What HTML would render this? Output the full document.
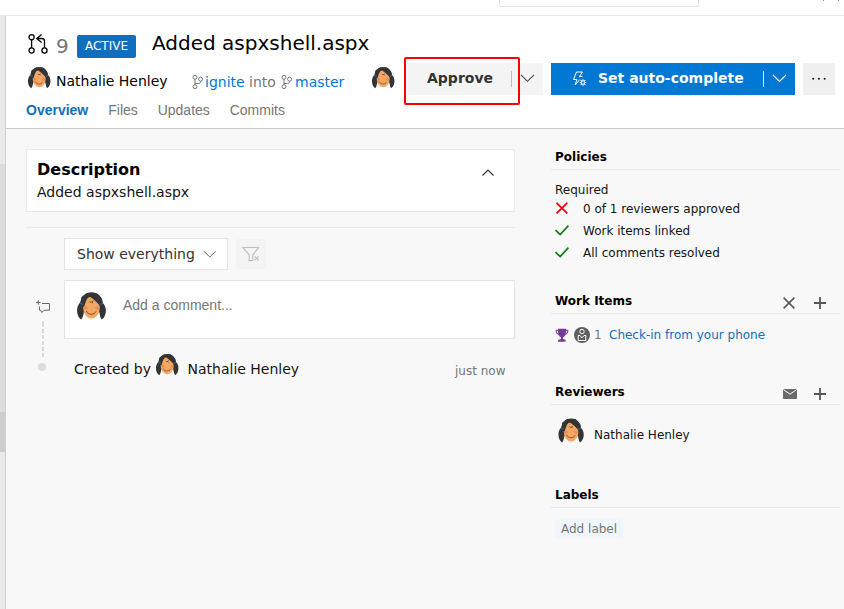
<!DOCTYPE html>
<html><head><meta charset="utf-8">
<style>
*{box-sizing:border-box;margin:0;padding:0}
html,body{width:844px;height:609px;overflow:hidden;background:#fff}
body{font-family:"DejaVu Sans","Liberation Sans",sans-serif;font-size:14px;color:#000;position:relative}
.abs{position:absolute;white-space:nowrap}
.lib{font-family:"Liberation Sans",sans-serif}
a{text-decoration:none;color:#0078d4}
</style></head><body>
<!-- top bar remnants -->
<div class="abs" style="left:499px;top:-9px;width:200px;height:16px;border:1px solid #e4e4e4;border-radius:2px;background:#fff"></div>
<div class="abs" style="left:0;top:15px;width:844px;height:1px;background:#eaeaea"></div>
<!-- left strip -->
<div class="abs" style="left:0;top:16px;width:5px;height:593px;background:#eaeaea"></div>
<div class="abs" style="left:0;top:164px;width:5px;height:248px;background:#dcdcdc"></div>
<div class="abs" style="left:0;top:412px;width:5px;height:40px;background:#cdcdcd"></div>
<div class="abs" style="left:5px;top:16px;width:1px;height:593px;background:#d0d0d0"></div>
<!-- content bg -->
<div class="abs" style="left:6px;top:128px;width:838px;height:481px;background:#f8f8f8;border-top:1px solid #c8c8c8"></div>

<!-- header -->
<svg class="abs" style="left:27px;top:33px" width="22" height="22" viewBox="0 0 22 22" fill="none" stroke="#000" stroke-width="1.300">
<circle cx="4.600" cy="4.200" r="2.550"/><circle cx="4.600" cy="17.500" r="2.550"/><circle cx="17.500" cy="17.500" r="2.550"/>
<path d="M4.600 6.800v8.100M17.500 14.900V8.200c0-1.700-1-2.700-2.700-2.700H10M14.600 1.600L9.800 5.500l4.800 3.900"/>
</svg>
<div class="abs" style="left:56px;top:34px;font-size:20px;line-height:24px;color:#767676">9</div>
<div class="abs" style="left:77px;top:35px;width:59px;height:23px;background:#106ebe;border-radius:2px;color:#fff;font-size:12px;line-height:23px;text-align:center">ACTIVE</div>
<div class="abs" style="left:152px;top:31px;font-size:20px;line-height:24px">Added aspxshell.aspx</div>

<svg viewBox="0 0 32 32" class="abs" style="left:24px;top:62px" width="32" height="32"><path fill="#343436" d="M15.300 4.900C10.700 4.900 7.300 7.800 6.500 12.900C4.600 14.400 3.700 17.300 4 20.300C4.300 23.200 5.600 25.500 7.300 26.200C8.400 24.400 9.100 22.400 9.200 20.400L21.400 20.400C21.600 22.400 22.100 24.400 23.100 26.200C24.800 25.400 26.100 23.200 26.400 20.300C26.700 17.400 25.700 14.500 23.900 13.100C23.300 7.800 19.900 4.900 15.300 4.900Z"/><ellipse cx="15.200" cy="16.800" rx="6.500" ry="8.500" fill="#f3a762"/><path fill="#343436" d="M13.200 7.800C12 9.300 10.500 12.200 9.500 16.400L6.500 14.200L7.400 8.500L12 5.400L19 5.600L23.400 10L23.900 14L21.800 15.600C20.400 13.400 17 10.300 13.200 7.800Z"/><ellipse cx="10.700" cy="17.200" rx="1.600" ry="1.300" fill="#e07c50" opacity=".55"/><ellipse cx="19.600" cy="17.200" rx="1.600" ry="1.300" fill="#e07c50" opacity=".55"/><path d="M11.300 19.800C12.500 22.700 17.300 22.900 18.600 20.100" fill="none" stroke="#5a3520" stroke-width=".6" stroke-linecap="round"/><path d="M14 12.200l.9.700.5-.600.700.9M16 12.200l.6-.5" fill="none" stroke="#2a2020" stroke-width=".55" stroke-linecap="round"/><path d="M6 13.400l2.400 1" stroke="#2b62a0" stroke-width="1.100" fill="none"/><path d="M21.500 14.400l2.500-.9" stroke="#2b62a0" stroke-width="1.100" fill="none"/></svg>
<svg viewBox="0 0 32 32" class="abs" style="left:368px;top:62px" width="32" height="32"><path fill="#343436" d="M15.300 4.900C10.700 4.900 7.300 7.800 6.500 12.900C4.600 14.400 3.700 17.300 4 20.300C4.300 23.200 5.600 25.500 7.300 26.200C8.400 24.400 9.100 22.400 9.200 20.400L21.400 20.400C21.600 22.400 22.100 24.400 23.100 26.200C24.800 25.400 26.100 23.200 26.400 20.300C26.700 17.400 25.700 14.500 23.900 13.100C23.300 7.800 19.900 4.900 15.300 4.900Z"/><ellipse cx="15.200" cy="16.800" rx="6.500" ry="8.500" fill="#f3a762"/><path fill="#343436" d="M13.200 7.800C12 9.300 10.500 12.200 9.500 16.400L6.500 14.200L7.400 8.500L12 5.400L19 5.600L23.400 10L23.900 14L21.800 15.600C20.400 13.400 17 10.300 13.200 7.800Z"/><ellipse cx="10.700" cy="17.200" rx="1.600" ry="1.300" fill="#e07c50" opacity=".55"/><ellipse cx="19.600" cy="17.200" rx="1.600" ry="1.300" fill="#e07c50" opacity=".55"/><path d="M11.300 19.800C12.500 22.700 17.300 22.900 18.600 20.100" fill="none" stroke="#5a3520" stroke-width=".6" stroke-linecap="round"/><path d="M14 12.200l.9.700.5-.600.700.9M16 12.200l.6-.5" fill="none" stroke="#2a2020" stroke-width=".55" stroke-linecap="round"/><path d="M6 13.400l2.400 1" stroke="#2b62a0" stroke-width="1.100" fill="none"/><path d="M21.500 14.400l2.500-.9" stroke="#2b62a0" stroke-width="1.100" fill="none"/></svg>
<div class="abs" style="left:56px;top:72px;line-height:18px">Nathalie Henley</div>
<div class="abs" style="left:205px;top:73px;line-height:18px;color:#767676"><a>ignite</a> into</div>
<div class="abs" style="left:295px;top:73px;line-height:18px"><a>master</a></div>
<svg class="abs" style="left:192px;top:74px" width="13" height="16" viewBox="0 0 13 16" fill="none" stroke="#767676" stroke-width="1"><circle cx="3" cy="3.300" r="2"/><circle cx="3" cy="12.600" r="2"/><circle cx="8.600" cy="5.200" r="2"/><path d="M3 5.200v5.500M8.600 7.100v.4c0 1.400-.8 2-2.200 2H3"/></svg>
<svg class="abs" style="left:281px;top:74px" width="13" height="16" viewBox="0 0 13 16" fill="none" stroke="#767676" stroke-width="1"><circle cx="3" cy="3.300" r="2"/><circle cx="3" cy="12.600" r="2"/><circle cx="8.600" cy="5.200" r="2"/><path d="M3 5.200v5.500M8.600 7.100v.4c0 1.400-.8 2-2.200 2H3"/></svg>

<!-- tabs -->
<div class="abs lib" style="left:26px;top:101px;line-height:18px;font-weight:bold;color:#106ebe">Overview</div>
<div class="abs lib" style="left:108.300px;top:101px;line-height:18px;color:#767676">Files</div>
<div class="abs lib" style="left:157.700px;top:101px;line-height:18px;color:#767676">Updates</div>
<div class="abs lib" style="left:229.700px;top:101px;line-height:18px;color:#767676">Commits</div>

<!-- buttons -->
<div class="abs" style="left:407px;top:63px;width:136px;height:32px;background:#f4f4f4"></div>
<svg class="abs" style="left:520px;top:73px" width="15" height="11" viewBox="0 0 15 11" fill="none" stroke="#444" stroke-width="1.1"><path d="M1 1.800l6.500 6.500 6.500-6.500"/></svg>
<div class="abs" style="left:427px;top:69px;line-height:18px;font-weight:bold;color:#333">Approve</div>
<div class="abs" style="left:511px;top:71px;width:1px;height:16px;background:#c0c0c0"></div>
<div class="abs" style="left:404px;top:57px;width:116px;height:48px;border:2px solid #f00;border-radius:2px"></div>
<div class="abs" style="left:551px;top:63px;width:244px;height:32px;background:#0078d4"></div>
<svg class="abs" style="left:572px;top:71px" width="16" height="16" viewBox="0 0 16 16" fill="none" stroke="#fff" stroke-width="1"><path d="M7.800 8.500L3.200 14l1.700-5.500H1.500L4.500 1h6L7.500 5.500h3"/><circle cx="11" cy="11.500" r="1.700"/><path d="M11 8.300v1.500M11 13.200v1.500M7.800 11.500h1.500M12.700 11.500h1.500M8.700 9.200l1.100 1.100M12.200 12.700l1.100 1.100M13.300 9.200l-1.100 1.100M9.800 12.700l-1.100 1.100" stroke-width="1.100"/></svg>
<svg class="abs" style="left:772px;top:73px" width="15" height="11" viewBox="0 0 15 11" fill="none" stroke="#fff" stroke-width="1.100"><path d="M1 2l6.500 6.500 6.500-6.500"/></svg>
<div class="abs" style="left:598px;top:69px;line-height:18px;font-weight:bold;color:#fff">Set auto-complete</div>
<div class="abs" style="left:763px;top:71px;width:1px;height:16px;background:#fff;opacity:.85"></div>
<div class="abs" style="left:803px;top:63px;width:32px;height:32px;background:#f0f0f0"></div>
<svg class="abs" style="left:811px;top:76px" width="16" height="6" viewBox="0 0 16 6" fill="#111"><circle cx="2.200" cy="2.800" r="1"/><circle cx="7.900" cy="2.800" r="1"/><circle cx="13.600" cy="2.800" r="1"/></svg>

<!-- description card -->
<div class="abs" style="left:26px;top:149px;width:489px;height:63px;background:#fff;border:1px solid #eaeaea"></div>
<div class="abs" style="left:37px;top:160px;font-size:16px;line-height:20px;font-weight:bold">Description</div>
<div class="abs" style="left:37px;top:183px;line-height:18px;color:#141414">Added aspxshell.aspx</div>
<svg class="abs" style="left:481px;top:167px" width="14" height="10" viewBox="0 0 14 10" fill="none" stroke="#333" stroke-width="1.200"><path d="M1.500 8.500l5.500-5.500 5.500 5.500"/></svg>
<div class="abs" style="left:26px;top:227px;width:489px;height:1px;background:#eaeaea"></div>

<div class="abs" style="left:64px;top:238px;width:164px;height:32px;background:#fff;border:1px solid #e4e4e4"></div>
<div class="abs" style="left:77px;top:245px;line-height:18px;color:#333">Show everything</div>
<svg class="abs" style="left:203px;top:250px" width="14" height="9" viewBox="0 0 14 9" fill="none" stroke="#666" stroke-width="1"><path d="M1 1.300l5.800 5.800 5.800-5.800"/></svg>
<div class="abs" style="left:236px;top:239px;width:30px;height:30px;background:#f4f4f4"></div>
<svg class="abs" style="left:242px;top:246px" width="18" height="16" viewBox="0 0 18 16" fill="none" stroke="#bcbcbc" stroke-width="1.100"><path d="M1 1.500h15.500L10.800 9v5.600H7.200V9z"/><path d="M12.600 10.400l4 4M16.600 10.400l-4 4"/></svg>

<div class="abs" style="left:64px;top:280px;width:451px;height:59px;background:#fff;border:1px solid #e4e4e4"></div>
<svg viewBox="0 0 32 32" class="abs" style="left:71.500px;top:285.500px" width="41" height="41"><path fill="#343436" d="M15.300 4.900C10.700 4.900 7.300 7.800 6.500 12.900C4.600 14.400 3.700 17.300 4 20.300C4.300 23.200 5.600 25.500 7.300 26.200C8.400 24.400 9.100 22.400 9.200 20.400L21.400 20.400C21.600 22.400 22.100 24.400 23.100 26.200C24.800 25.400 26.100 23.200 26.400 20.300C26.700 17.400 25.700 14.500 23.900 13.100C23.300 7.800 19.900 4.900 15.300 4.900Z"/><ellipse cx="15.200" cy="16.800" rx="6.500" ry="8.500" fill="#f3a762"/><path fill="#343436" d="M13.200 7.800C12 9.300 10.500 12.200 9.500 16.400L6.500 14.200L7.400 8.500L12 5.400L19 5.600L23.400 10L23.900 14L21.800 15.600C20.400 13.400 17 10.300 13.200 7.800Z"/><ellipse cx="10.700" cy="17.200" rx="1.600" ry="1.300" fill="#e07c50" opacity=".55"/><ellipse cx="19.600" cy="17.200" rx="1.600" ry="1.300" fill="#e07c50" opacity=".55"/><path d="M11.300 19.800C12.500 22.700 17.300 22.900 18.600 20.100" fill="none" stroke="#5a3520" stroke-width=".6" stroke-linecap="round"/><path d="M14 12.200l.9.700.5-.600.700.9M16 12.200l.6-.5" fill="none" stroke="#2a2020" stroke-width=".55" stroke-linecap="round"/><path d="M6 13.400l2.400 1" stroke="#2b62a0" stroke-width="1.100" fill="none"/><path d="M21.500 14.400l2.500-.9" stroke="#2b62a0" stroke-width="1.100" fill="none"/></svg>
<div class="abs lib" style="left:123px;top:296px;line-height:18px;color:#767676">Add a comment...</div>
<div class="abs" style="left:74px;top:360px;line-height:18px;color:#141414">Created by</div>
<svg viewBox="0 0 32 32" class="abs" style="left:152px;top:349px" width="32" height="32"><path fill="#343436" d="M15.300 4.900C10.700 4.900 7.300 7.800 6.500 12.900C4.600 14.400 3.700 17.300 4 20.300C4.300 23.200 5.600 25.500 7.300 26.200C8.400 24.400 9.100 22.400 9.200 20.400L21.400 20.400C21.600 22.400 22.100 24.400 23.100 26.200C24.800 25.400 26.100 23.200 26.400 20.300C26.700 17.400 25.700 14.500 23.900 13.100C23.300 7.800 19.900 4.900 15.300 4.900Z"/><ellipse cx="15.200" cy="16.800" rx="6.500" ry="8.500" fill="#f3a762"/><path fill="#343436" d="M13.200 7.800C12 9.300 10.500 12.200 9.500 16.400L6.500 14.200L7.400 8.500L12 5.400L19 5.600L23.400 10L23.900 14L21.800 15.600C20.400 13.400 17 10.300 13.200 7.800Z"/><ellipse cx="10.700" cy="17.200" rx="1.600" ry="1.300" fill="#e07c50" opacity=".55"/><ellipse cx="19.600" cy="17.200" rx="1.600" ry="1.300" fill="#e07c50" opacity=".55"/><path d="M11.300 19.800C12.500 22.700 17.300 22.900 18.600 20.100" fill="none" stroke="#5a3520" stroke-width=".6" stroke-linecap="round"/><path d="M14 12.200l.9.700.5-.600.700.9M16 12.200l.6-.5" fill="none" stroke="#2a2020" stroke-width=".55" stroke-linecap="round"/><path d="M6 13.400l2.400 1" stroke="#2b62a0" stroke-width="1.100" fill="none"/><path d="M21.500 14.400l2.500-.9" stroke="#2b62a0" stroke-width="1.100" fill="none"/></svg>
<div class="abs" style="left:187.500px;top:360px;line-height:18px;color:#141414">Nathalie Henley</div>
<div class="abs" style="left:455px;top:363px;font-size:12px;line-height:16px;color:#767676">just now</div>

<!-- right column -->
<div class="abs" style="left:555px;top:149px;font-size:12px;line-height:16px;font-weight:bold">Policies</div>
<div class="abs" style="left:550px;top:169px;width:290px;height:1px;background:#eaeaea"></div>
<div class="abs" style="left:555px;top:182px;font-size:12px;line-height:16px;color:#141414">Required</div>
<div class="abs" style="left:583px;top:201px;font-size:12px;line-height:16px;color:#141414">0 of 1 reviewers approved</div>
<div class="abs" style="left:583px;top:223px;font-size:12px;line-height:16px;color:#141414">Work items linked</div>
<div class="abs" style="left:583px;top:245px;font-size:12px;line-height:16px;color:#141414">All comments resolved</div>

<div class="abs" style="left:555px;top:293px;font-size:12px;line-height:16px;font-weight:bold">Work Items</div>
<div class="abs" style="left:550px;top:313px;width:290px;height:1px;background:#eaeaea"></div>
<div class="abs" style="left:594px;top:327px;font-size:12px;line-height:16px;color:#767676">1</div>
<div class="abs" style="left:609px;top:327px;font-size:12px;line-height:16px"><a style="color:#106ebe">Check-in from your phone</a></div>

<div class="abs" style="left:555px;top:384px;font-size:12px;line-height:16px;font-weight:bold">Reviewers</div>
<div class="abs" style="left:550px;top:404px;width:290px;height:1px;background:#eaeaea"></div>
<svg viewBox="0 0 32 32" class="abs" style="left:554px;top:412.5px" width="36" height="36"><path fill="#343436" d="M15.300 4.900C10.700 4.900 7.300 7.800 6.500 12.900C4.600 14.400 3.700 17.300 4 20.300C4.300 23.200 5.600 25.500 7.300 26.200C8.400 24.400 9.100 22.400 9.200 20.400L21.400 20.400C21.600 22.400 22.100 24.400 23.100 26.200C24.800 25.400 26.100 23.200 26.400 20.300C26.700 17.400 25.700 14.500 23.900 13.100C23.300 7.800 19.900 4.900 15.300 4.900Z"/><ellipse cx="15.200" cy="16.800" rx="6.500" ry="8.500" fill="#f3a762"/><path fill="#343436" d="M13.200 7.800C12 9.300 10.500 12.200 9.500 16.400L6.500 14.200L7.400 8.500L12 5.400L19 5.600L23.400 10L23.900 14L21.800 15.600C20.400 13.400 17 10.300 13.200 7.800Z"/><ellipse cx="10.700" cy="17.200" rx="1.600" ry="1.300" fill="#e07c50" opacity=".55"/><ellipse cx="19.600" cy="17.200" rx="1.600" ry="1.300" fill="#e07c50" opacity=".55"/><path d="M11.300 19.800C12.500 22.700 17.300 22.900 18.600 20.100" fill="none" stroke="#5a3520" stroke-width=".6" stroke-linecap="round"/><path d="M14 12.200l.9.700.5-.600.700.9M16 12.200l.6-.5" fill="none" stroke="#2a2020" stroke-width=".55" stroke-linecap="round"/><path d="M6 13.400l2.400 1" stroke="#2b62a0" stroke-width="1.100" fill="none"/><path d="M21.500 14.400l2.500-.9" stroke="#2b62a0" stroke-width="1.100" fill="none"/></svg>
<div class="abs" style="left:594px;top:427px;font-size:12px;line-height:16px;color:#141414">Nathalie Henley</div>

<div class="abs" style="left:555px;top:487px;font-size:12px;line-height:16px;font-weight:bold">Labels</div>
<div class="abs" style="left:550px;top:507px;width:290px;height:1px;background:#eaeaea"></div>
<div class="abs" style="left:555px;top:519px;width:68px;height:19px;background:#eff6fc;border-radius:2px"></div>
<div class="abs" style="left:561px;top:521px;font-size:12px;line-height:16px;color:#767676">Add label</div>

<!-- policy icons -->
<svg class="abs" style="left:555px;top:201px" width="14" height="14" viewBox="0 0 14 14" fill="none" stroke="#e60000" stroke-width="1.700"><path d="M1.500 1.800l10.800 10.600M12.300 1.800L1.500 12.400"/></svg>
<svg class="abs" style="left:554px;top:224px" width="16" height="12" viewBox="0 0 16 12" fill="none" stroke="#107c10" stroke-width="1.700"><path d="M1.500 6.200l4.700 4.400 8.200-8.900"/></svg>
<svg class="abs" style="left:554px;top:246px" width="16" height="12" viewBox="0 0 16 12" fill="none" stroke="#107c10" stroke-width="1.700"><path d="M1.500 6.200l4.700 4.400 8.200-8.900"/></svg>
<!-- work items icons -->
<svg class="abs" style="left:783px;top:297px" width="12" height="12" viewBox="0 0 12 12" fill="none" stroke="#555" stroke-width="1.500"><path d="M.6.600l10.800 10.800M11.400.6L.6 11.400"/></svg>
<svg class="abs" style="left:814px;top:297px" width="12" height="12" viewBox="0 0 12 12" fill="none" stroke="#555" stroke-width="1.800"><path d="M6 0v12M0 6h12"/></svg>
<svg class="abs" style="left:555px;top:328px" width="14" height="15" viewBox="0 0 14 15" fill="#773b93"><path d="M3 .8h8v1h2.300c.3 2.600-.6 4.300-2.800 4.900C9.900 8 8.900 8.900 8 9.300v1.700l2.600.9v1.900H3.100v-1.900L6 11V9.300C5.100 8.900 4.100 8 3.500 6.700 1.300 6.100.4 4.400.7 1.800H3zM3 2.800H1.700c0 1.400.5 2.300 1.500 2.800C3 4.700 3 3.800 3 2.800zm8 0c0 1-.1 1.900-.2 2.800 1-.5 1.500-1.400 1.500-2.800z"/></svg>
<svg class="abs" style="left:574px;top:327px" width="16" height="16" viewBox="0 0 16 16"><circle cx="8" cy="8" r="8" fill="#5e5e5e"/><g fill="none" stroke="#fff" stroke-width="1"><circle cx="8" cy="4.500" r="2.200"/><path d="M6 8.500H4.200v5h7.600v-5H10L8 10.800z"/></g></svg>
<!-- reviewers icons -->
<svg class="abs" style="left:783px;top:389px" width="14" height="10" viewBox="0 0 14 10"><rect width="14" height="10" rx=".8" fill="#6a6a6a"/><path d="M.4.600L7 5.200 13.600.6" fill="none" stroke="#fff" stroke-width="1"/></svg>
<svg class="abs" style="left:814px;top:388px" width="12" height="12" viewBox="0 0 12 12" fill="none" stroke="#555" stroke-width="1.800"><path d="M6 0v12M0 6h12"/></svg>
<!-- timeline -->
<svg class="abs" style="left:35px;top:299px" width="16" height="16" viewBox="0 0 16 16" fill="none" stroke="#666" stroke-width="1"><path d="M3.300 1.200v4.600M1 3.500h4.600M7 4.500h7.500v6.700H9l-2.200 2.300-1-2.300H4.500V7.500"/></svg>
<div class="abs" style="left:42px;top:321px;width:2px;height:38px;background:repeating-linear-gradient(to bottom,#dadada 0,#dadada 4px,transparent 4px,transparent 6px);background-position:0 2px"></div>
<div class="abs" style="left:38px;top:363px;width:8px;height:8px;border-radius:50%;background:#dcdcdc"></div>
<div class="abs" style="left:823px;top:0;width:1px;height:1px;background:#999"></div>
<div class="abs" style="left:838px;top:0;width:1px;height:1px;background:#999"></div>
</body></html>
